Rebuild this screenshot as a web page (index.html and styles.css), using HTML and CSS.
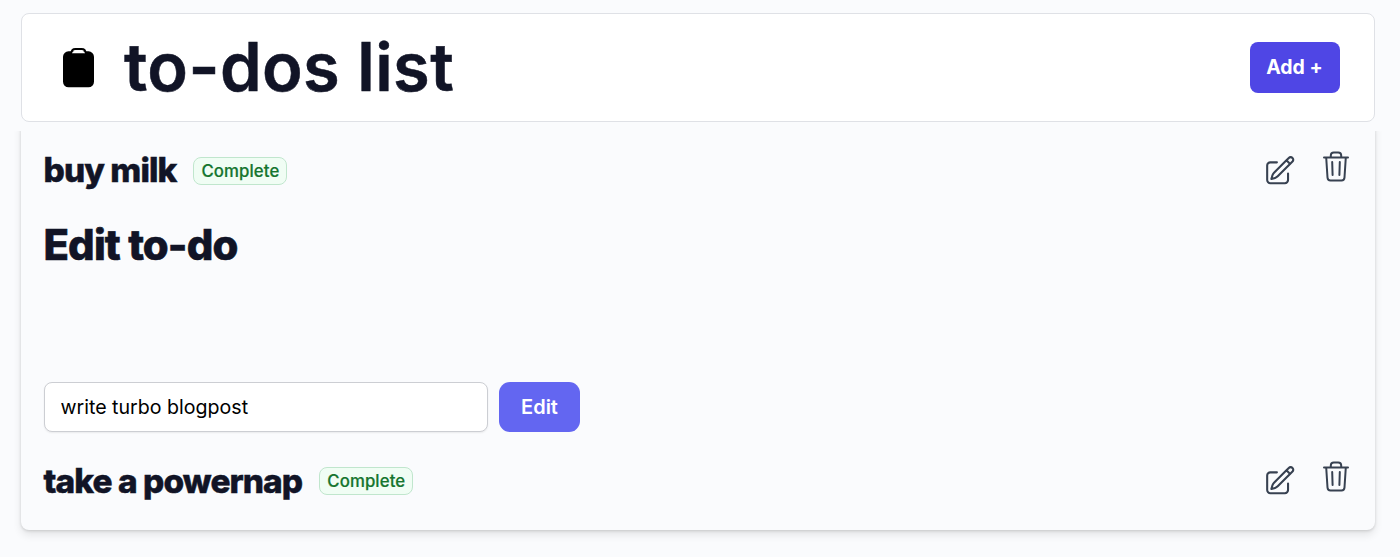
FILE: index.html
```
<!DOCTYPE html>
<html lang="en">
<head>
    <meta charset="UTF-8">
    <meta name="viewport" content="width=device-width, initial-scale=1.0">
    <title>to-dos list</title>
    <link rel="stylesheet" href="styles.css">
</head>
<body>
    <!-- Header -->
    <header class="header">
        <svg class="clipboard-icon" viewBox="0 0 32 40">
            <rect x="0" y="3.3" width="31" height="36" rx="5.5"/>
            <path class="clip" d="M8.500 5.200C8.500 2.400 10 1 12.500 1H18.500C21 1 22.500 2.400 22.500 5.200"/>
            <path class="clip-gap" d="M9 5.300C9.500 3.200 11.500 2.400 13 2.400H18C19.500 2.400 21.500 3.200 22 5.300Z"/>
        </svg>
        <h1>to-dos list</h1>
        <button class="btn-add">Add +</button>
    </header>

    <!-- To-do List -->
    <main class="todo-list">
        <div class="todo">
            <h2>buy milk</h2>
            <span class="badge">Complete</span>
            <div class="actions">
                <svg class="edit-icon" viewBox="0 0 24 24">
                    <path d="M16.862 4.487l1.687-1.688a1.875 1.875 0 112.652 2.652L10.582 16.07a4.5 4.5 0 01-1.897 1.13L6 18l.8-2.685a4.5 4.5 0 011.13-1.897l8.932-8.931zm0 0L19.5 7.125M18 14v4.75A2.250 2.250 0 0115.75 21H5.25A2.250 2.250 0 013 18.75V8.250A2.250 2.250 0 015.25 6H10"/>
                </svg>
                <svg class="trash-icon" viewBox="0 0 26 31">
                    <path d="M1 6.500H25M7.800 6.500V4.500Q7.800 1.500 10.800 1.500H15.200Q18.200 1.500 18.200 4.500V6.500M3.200 6.500L4.500 26.500Q4.700 29.500 7.500 29.500H18.500Q21.300 29.500 21.500 26.500L22.800 6.500M9.200 11L9.600 24M16.800 11L16.400 24"/>
                </svg>
            </div>
        </div>

        <!-- Edit Form -->
        <div class="edit-todo">
            <h1>Edit to-do</h1>
            <form class="edit-form">
                <input type="text" value="write turbo blogpost">
                <button type="button" class="btn-edit">Edit</button>
            </form>
        </div>

        <div class="todo">
            <h2>take a powernap</h2>
            <span class="badge">Complete</span>
            <div class="actions">
                <svg class="edit-icon" viewBox="0 0 24 24">
                    <path d="M16.862 4.487l1.687-1.688a1.875 1.875 0 112.652 2.652L10.582 16.07a4.5 4.5 0 01-1.897 1.13L6 18l.8-2.685a4.5 4.5 0 011.13-1.897l8.932-8.931zm0 0L19.5 7.125M18 14v4.75A2.250 2.250 0 0115.75 21H5.25A2.250 2.250 0 013 18.75V8.250A2.250 2.250 0 015.25 6H10"/>
                </svg>
                <svg class="trash-icon" viewBox="0 0 26 31">
                    <path d="M1 6.500H25M7.800 6.500V4.500Q7.800 1.500 10.800 1.500H15.200Q18.200 1.500 18.200 4.500V6.500M3.200 6.500L4.500 26.500Q4.700 29.500 7.500 29.500H18.500Q21.300 29.500 21.500 26.500L22.800 6.500M9.200 11L9.600 24M16.800 11L16.400 24"/>
                </svg>
            </div>
        </div>
    </main>
</body>
</html>
```
FILE: styles.css
```
/* Global Styles */
* {
    box-sizing: border-box;
    margin: 0;
    padding: 0;
    font-family: Inter, sans-serif;
}
body {
    min-height: 100vh;
    padding: 13px 25.5px 0 21px;
    background-color: #fafbfd;
    color: #111426;
}

/* Header */
.header {
    display: flex;
    align-items: center;
    height: 109px;
    padding: 0 34px 1px 41px;
    background-color: #fff;
    border: 1px solid #dfe1e6;
    border-radius: 8px;
}
.header h1 {
    margin-left: 29px;
    font-size: 66.8px;
    font-weight: 600;
    letter-spacing: 0.4px;
    line-height: 1;
    -webkit-text-stroke: 0.5px #111426;
}
.clipboard-icon {
    width: 32px;
    height: 40px;
    margin-top: 2px;
}
.clip {
    fill: none;
    stroke: #000;
    stroke-width: 2;
}
.clip-gap {
    fill: #fff;
}
.btn-add {
    width: 90px;
    height: 51px;
    margin-left: auto;
    border: none;
    border-radius: 8px;
    background-color: #4f46e5;
    color: #fff;
    font-size: 19.5px;
    font-weight: 700;
}

/* To-do List */
.todo-list {
    height: 408px;
    padding: 26px 26px 0 22.5px;
    border-radius: 0 0 8px 8px;
    background-color: #fafbfd;
    box-shadow: 0 1px 3px rgba(0,0,0,0.14), 0 5px 8px rgba(0,0,0,0.09);
    clip-path: inset(9px -12px -20px -12px);
}
.todo {
    display: flex;
    align-items: center;
    height: 46px;
}
.todo h2 {
    font-size: 33.4px;
    font-weight: 800;
    letter-spacing: -0.027em;
    line-height: 1;
    -webkit-text-stroke: 0.5px #111426;
}
.badge {
    height: 28px;
    margin-left: 17px;
    padding: 0 7px;
    border: 1px solid #c0e6cd;
    border-radius: 8px;
    background-color: #f0fdf4;
    color: #15752f;
    font-size: 16.8px;
    font-weight: 500;
    letter-spacing: 0.1px;
    line-height: 26px;
    -webkit-text-stroke: 0.2px #15752f;
}
.actions {
    display: flex;
    align-items: flex-start;
    margin: -4px 0 0 auto;
}
.actions svg {
    fill: none;
    stroke: #374151;
    stroke-linecap: round;
    stroke-linejoin: round;
}
.edit-icon {
    width: 33.4px;
    height: 33.4px;
    margin: 3px 26px 0 0;
    stroke-width: 1.5;
}
.trash-icon {
    width: 26px;
    height: 31px;
    stroke-width: 2;
}

/* Edit Form */
.edit-todo {
    height: 264.4px;
    padding-top: 29px;
}
.edit-todo h1 {
    font-size: 41.8px;
    font-weight: 800;
    letter-spacing: -0.021em;
    line-height: 44px;
    -webkit-text-stroke: 0.6px #111426;
}
.edit-form {
    display: flex;
    gap: 11px;
    margin-top: 115px;
}
.edit-form input {
    width: 444.5px;
    height: 50px;
    padding: 0 16px;
    border: 1px solid #ccced3;
    border-radius: 8px;
    background-color: #fff;
    box-shadow: 0 1px 2px rgba(0,0,0,0.07);
    color: #000;
    font-size: 19.6px;
}
.btn-edit {
    width: 81px;
    height: 50px;
    border: none;
    border-radius: 11px;
    background-color: #6366f1;
    color: #fff;
    font-size: 20px;
    font-weight: 580;
}
```
